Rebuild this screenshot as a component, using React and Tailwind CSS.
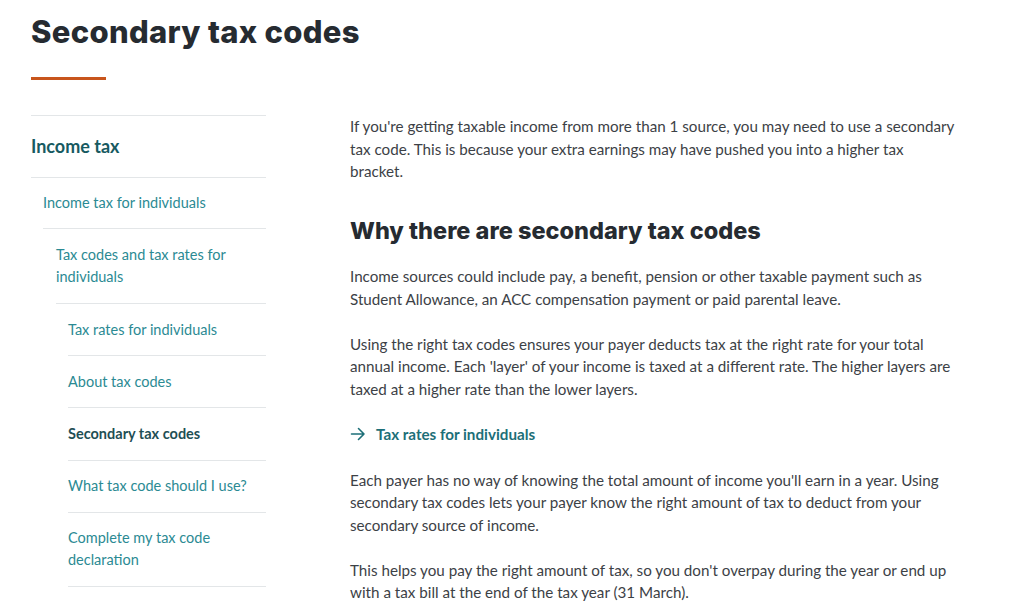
import React from 'react';

const body = "font-['Lato','Liberation_Sans',sans-serif]";
const head = "font-['Inter','Liberation_Sans',sans-serif]";

const navItems = [
  { label: 'Tax rates for individuals' },
  { label: 'About tax codes' },
  { label: 'Secondary tax codes', active: true },
  { label: 'What tax code should I use?' },
  { label: 'Complete my tax code declaration' },
];

const Sidebar = () => (
  <nav className={`w-[235px] shrink-0 border-t border-[#e3e6e8] ${body}`}>
    <div className="h-[62px] flex items-center border-b border-[#e3e6e8] text-[18px] font-bold text-[#175a61]">
      Income tax
    </div>
    <div className="pl-3">
      <div className="py-[14px] border-b border-[#e3e6e8] text-[14.5px] leading-[22px] text-[#2b8a93]">
        Income tax for individuals
      </div>
      <div className="pl-[13px]">
        <div className="py-[15px] border-b border-[#e3e6e8] text-[14.5px] leading-[22px] text-[#2b8a93] pr-6">
          Tax codes and tax rates for individuals
        </div>
        <ul className="pl-3">
          {navItems.map((item) => (
            <li
              key={item.label}
              className={`py-[14.6px] border-b border-[#e3e6e8] text-[14.5px] leading-[22px] ${
                item.active ? 'font-bold text-[#1f4f55]' : 'text-[#2b8a93]'
              }`}
            >
              <span className={item.label.startsWith('Complete') ? 'block w-[150px]' : ''}>
                {item.label}
              </span>
            </li>
          ))}
        </ul>
      </div>
    </div>
  </nav>
);

const P = ({ children }) => (
  <p className="text-[15.2px] leading-[22.7px] text-[#3c4146] mb-[22px]">{children}</p>
);

const App = () => {
  return (
    <div className={`min-h-screen bg-white pl-[31px] ${body}`}>
      <h1 className={`pt-[12px] text-[31px] leading-[40px] font-extrabold tracking-[0.3px] text-[#262b31] ${head}`}>
        Secondary tax codes
      </h1>
      <div className="mt-[25px] mb-[35px] w-[75px] h-[3px] bg-[#c8551c]" />

      <div className="flex gap-[84px]">
        <Sidebar />

        <main className="w-[607px]">
          <P>
            If you're getting taxable income from more than 1 source, you may need to use a secondary
            tax code. This is because your extra earnings may have pushed you into a higher tax
            bracket.
          </P>
          <h2 className={`mt-[33px] mb-[19px] text-[23.5px] leading-[30px] font-extrabold text-[#262b31] ${head}`}>
            Why there are secondary tax codes
          </h2>
          <P>
            Income sources could include pay, a benefit, pension or other taxable payment such as
            Student Allowance, an ACC compensation payment or paid parental leave.
          </P>
          <P>
            Using the right tax codes ensures your payer deducts tax at the right rate for your total
            annual income. Each 'layer' of your income is taxed at a different rate. The higher layers
            are taxed at a higher rate than the lower layers.
          </P>
          <a className="flex items-center gap-[10px] text-[15.2px] leading-[22px] font-bold text-[#1d6f78] mb-[24px]">
            <svg width="16" height="14" viewBox="0 0 16 14" fill="none" stroke="currentColor" strokeWidth="1.6" strokeLinecap="round" strokeLinejoin="round">
              <path d="M1.5 7h12.5M8.5 1.5 14 7l-5.5 5.5" />
            </svg>
            Tax rates for individuals
          </a>
          <P>
            Each payer has no way of knowing the total amount of income you'll earn in a year. Using
            secondary tax codes lets your payer know the right amount of tax to deduct from your
            secondary source of income.
          </P>
          <P>
            This helps you pay the right amount of tax, so you don't overpay during the year or end up
            with a tax bill at the end of the tax year (31 March).
          </P>
        </main>
      </div>
    </div>
  );
};

export default App;
